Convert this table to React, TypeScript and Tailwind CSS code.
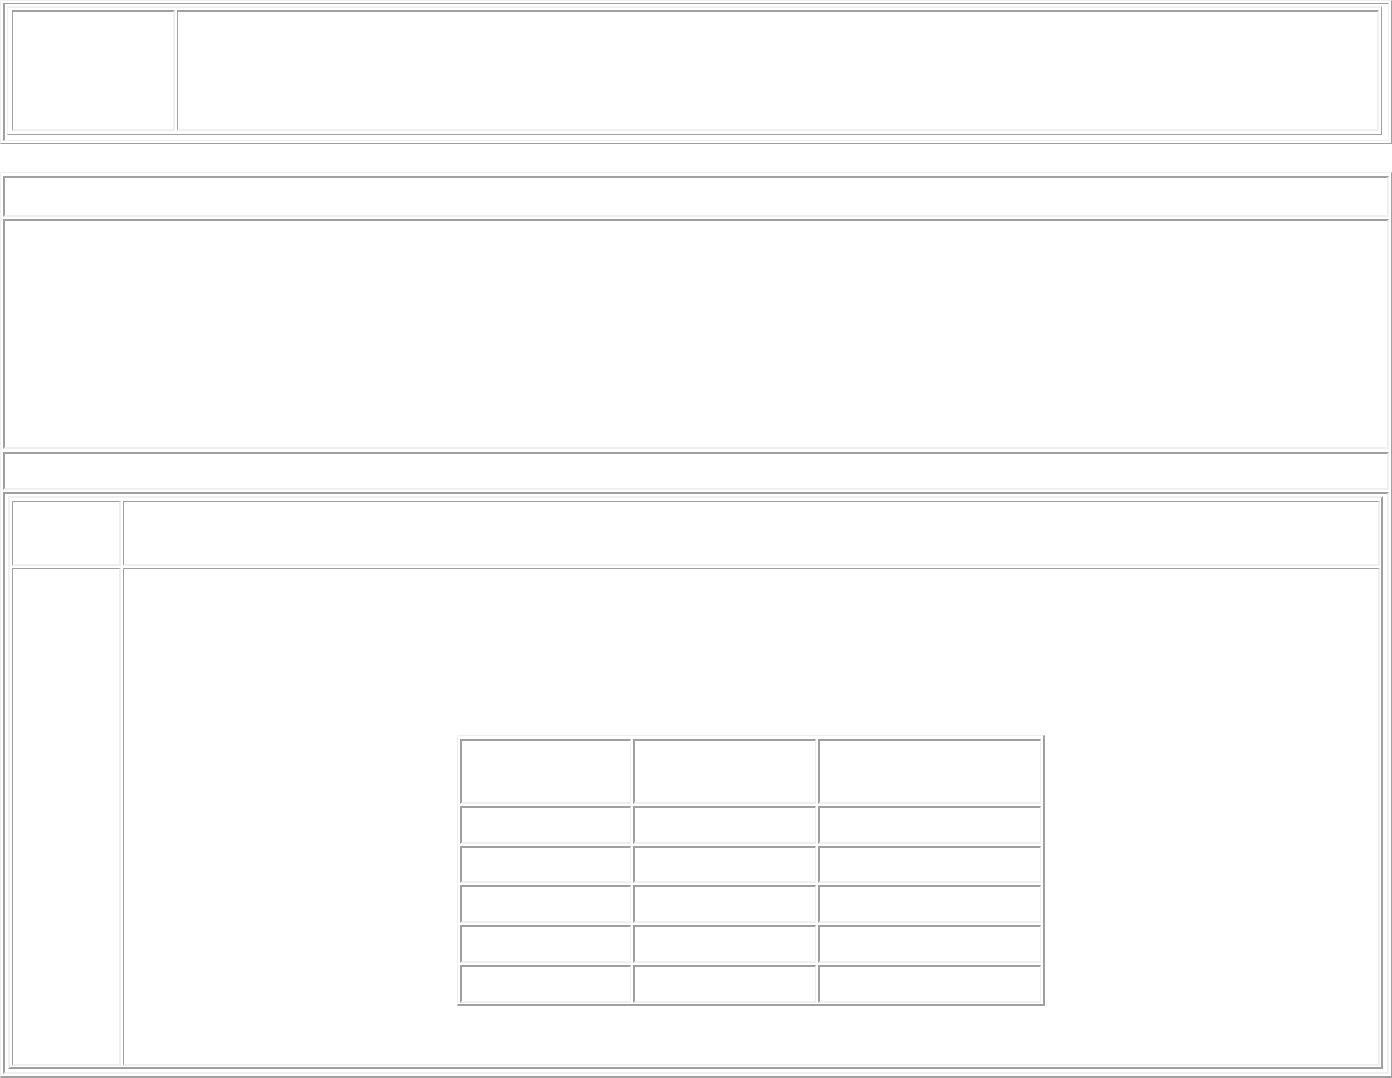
import React from "react";

const OUT = "border-t-[#f0f0f0] border-l-[#f0f0f0] border-r-[#a0a0a0] border-b-[#a0a0a0]";
const IN = "border-t-[#a0a0a0] border-l-[#a0a0a0] border-r-[#f0f0f0] border-b-[#f0f0f0]";

function SmallTable() {
  const rows = 6;
  const cells = [];
  for (let r = 0; r < rows; r++) {
    for (let c = 0; c < 3; c++) {
      cells.push(
        <div
          key={`${r}-${c}`}
          className={`border-t-2 border-l-2 border-b-2 border-r ${IN}`}
        />
      );
    }
  }
  return (
    <div
      className={`box-border h-[271px] w-[588px] shrink-0 border-t border-l border-r-2 border-b-2 ${OUT} pl-[2px] pt-[3px]`}
    >
      <div className="grid grid-cols-[171px_183px_223px] grid-rows-[65px_38px_37px_38px_38px_38px] gap-x-[2px] gap-y-[2px]">
        {cells}
      </div>
    </div>
  );
}

export default function App() {
  return (
    <div className="w-[1392px] bg-white" style={{ fontFamily: '"Liberation Serif", serif' }}>
      {/* Table A */}
      <div className={`box-border h-[144px] w-[1392px] border ${OUT} p-[2px]`}>
        <div className={`box-border h-full border-l-2 border-t border-b border-r ${IN} pl-[2px] pt-[2px]`}>
          <div
            className={`box-border h-[129px] w-[1375px] border-t-2 border-l border-r border-b ${OUT} pl-[4px] pt-[2px]`}
          >
            <div className="flex h-[121px] gap-[2px]">
              <div className={`w-[163px] border-t-2 border-l border-b-2 border-r-2 ${IN}`} />
              <div className={`w-[1202px] border-t-2 border-l border-b-2 border-r-2 ${IN}`} />
            </div>
          </div>
        </div>
      </div>

      {/* Table B */}
      <div
        className={`mt-[28px] box-border flex h-[906px] w-[1392px] flex-col border-t border-l border-r border-b-2 ${OUT} px-[2px] pt-[3px]`}
      >
        <div className={`h-[41px] shrink-0 border-2 ${IN}`} />
        <div className={`mt-[2px] h-[230px] shrink-0 border-2 ${IN}`} />
        <div className={`mt-[3px] h-[38px] shrink-0 border-2 ${IN}`} />
        <div className={`mt-[2px] h-[582px] shrink-0 border-2 ${IN} pl-[3px] pt-[2px]`}>
          <div className={`box-border h-[573px] w-[1375px] border-2 ${OUT} pl-[2px] pt-[3px]`}>
            <div className="grid grid-cols-[109px_1257px] grid-rows-[65px_498px] gap-[2px]">
              <div className={`border-t border-l border-b-2 border-r-2 ${IN}`} />
              <div className={`border-t border-l border-b-2 border-r-2 ${IN}`} />
              <div className={`border-t border-l border-b-2 border-r-2 ${IN}`} />
              <div className={`flex justify-center border-t border-l border-b-2 border-r-2 ${IN} pt-[166px]`}>
                <SmallTable />
              </div>
            </div>
          </div>
        </div>
      </div>
    </div>
  );
}
